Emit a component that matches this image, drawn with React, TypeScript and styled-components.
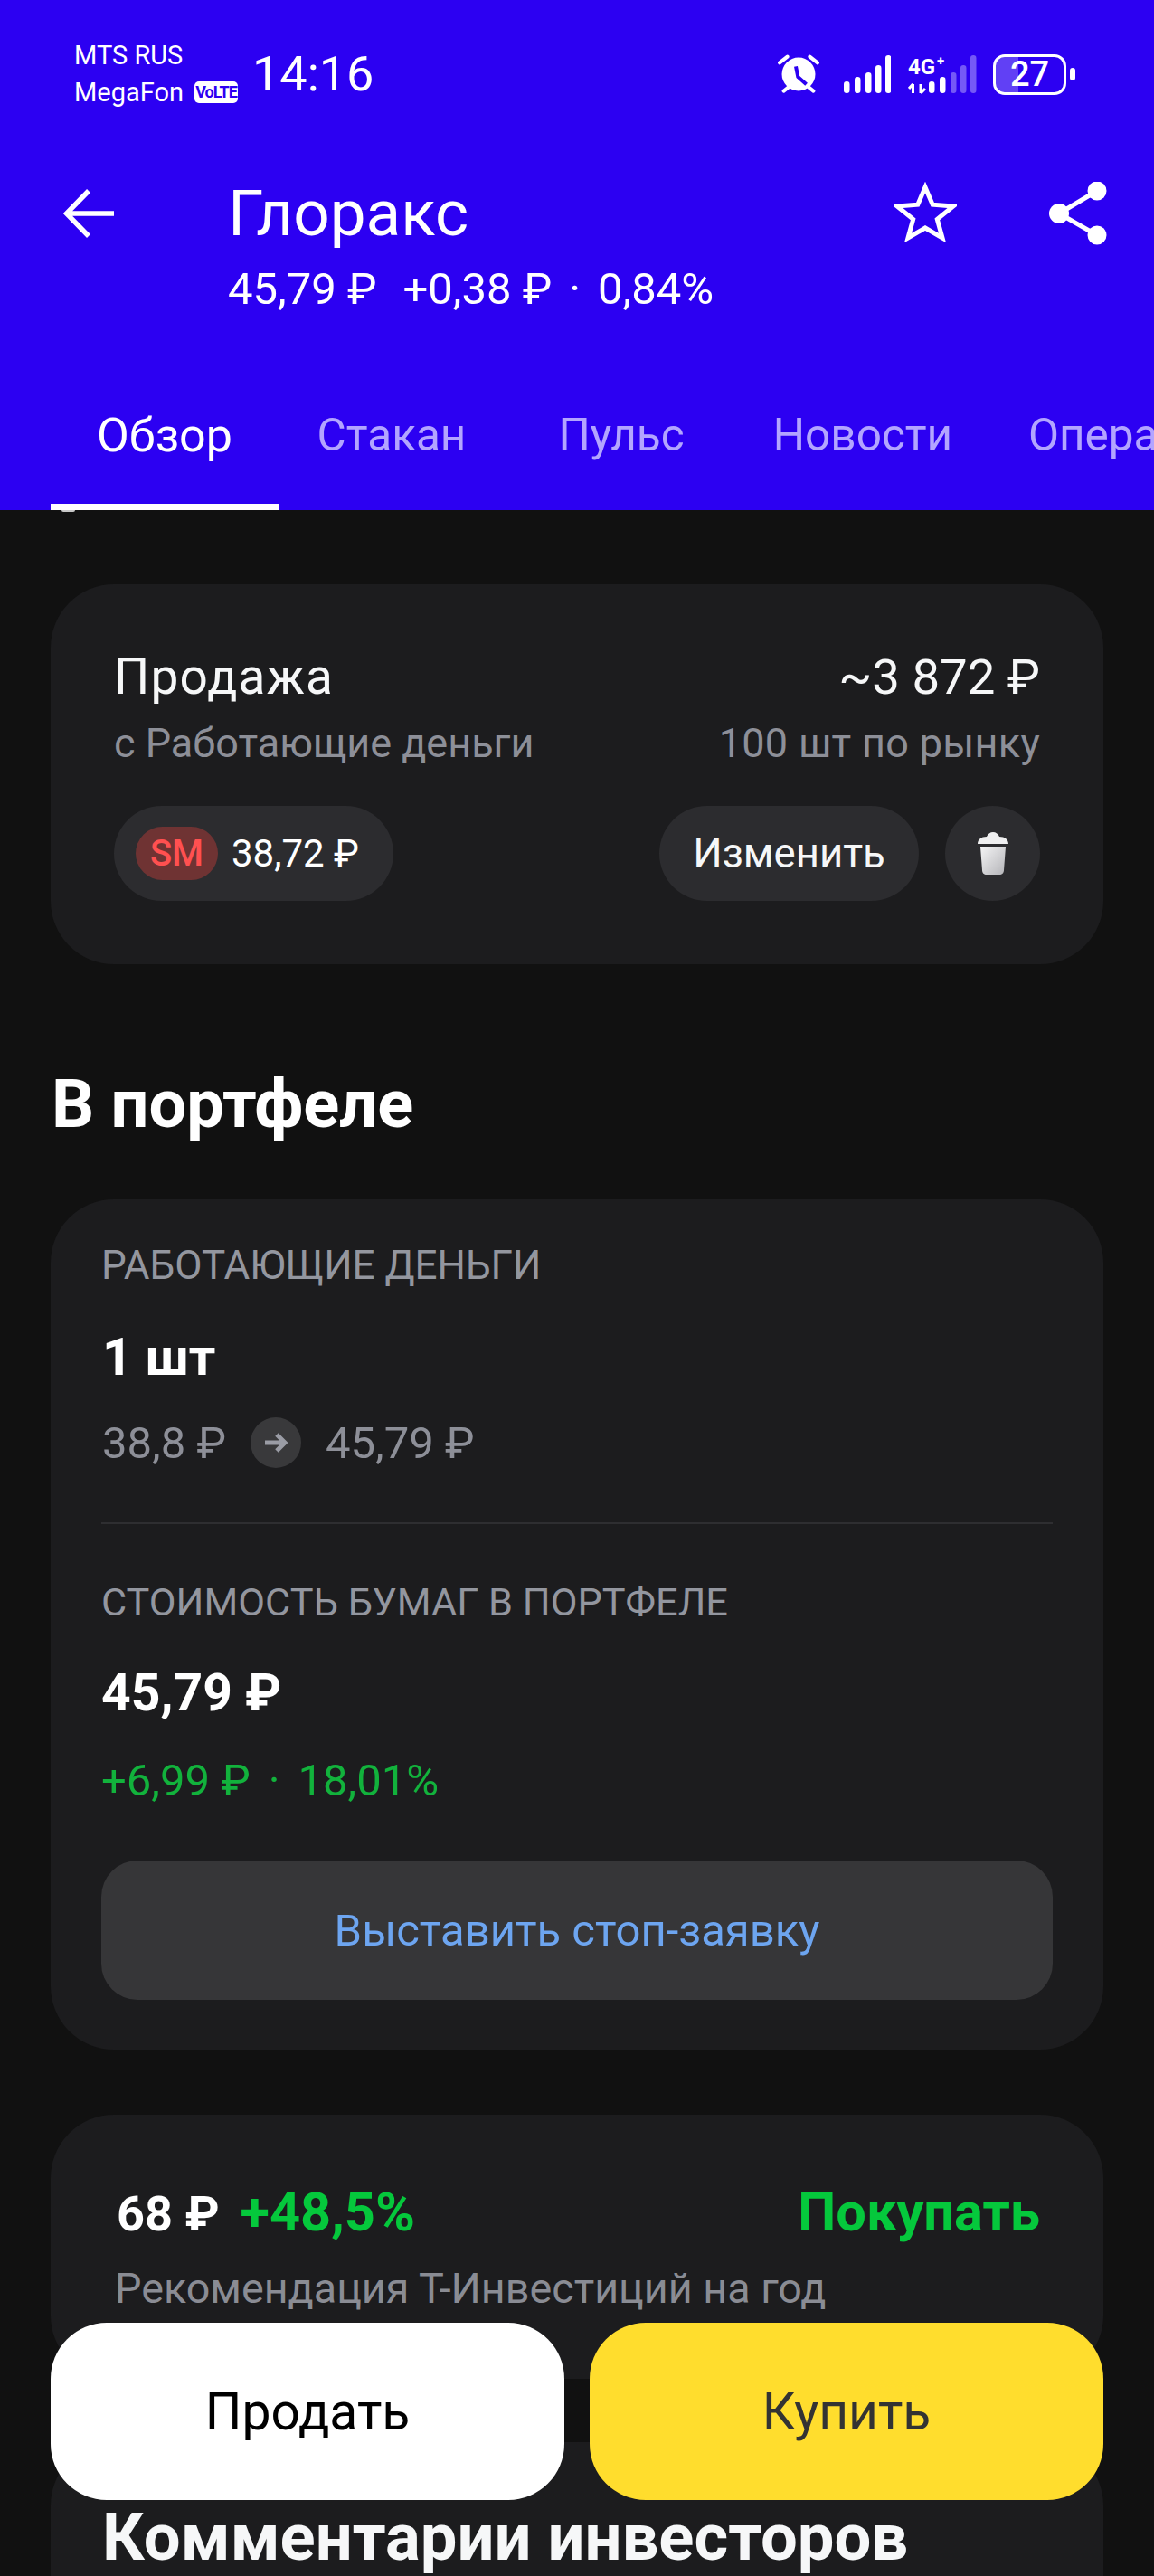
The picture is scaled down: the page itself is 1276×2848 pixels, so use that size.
import React from 'react';
import styled, { createGlobalStyle } from 'styled-components';

const GlobalStyle = createGlobalStyle`
  html, body {
    margin: 0;
    padding: 0;
    background: #111111;
  }
  * {
    box-sizing: border-box;
  }
`;

const tabs = [
  { label: 'Обзор', width: 252, active: true },
  { label: 'Стакан', width: 250 },
  { label: 'Пульс', width: 258 },
  { label: 'Новости', width: 276 },
  { label: 'Операции', width: 320 },
];

function App() {
  return (
    <Page>
      <GlobalStyle />
      <Header>
        <StatusBar>
          <Carriers>
            <CarrierLine>MTS RUS</CarrierLine>
            <CarrierLine>
              MegaFon<VoLte>VoLTE</VoLte>
            </CarrierLine>
          </Carriers>
          <Time>14:16</Time>
          <StatusIcons>
            <svg width="46" height="44" viewBox="0 0 46 44">
              <circle cx="23" cy="22" r="18.5" fill="#fff" />
              <path d="M2 9.3 10.6 2.6M44 9.3 35.4 2.6M6.6 40.6l5-4M39.4 40.6l-5-4" stroke="#fff" strokeWidth="4" strokeLinecap="round" />
              <path d="M20 13.3 22.3 25 31.6 33.3" stroke="#2c00f2" strokeWidth="4" fill="none" />
            </svg>
            <SignalIcon width="52" height="44" viewBox="0 0 52 44">
              <rect x="0" y="30" width="6.5" height="13" rx="3.2" fill="#fff" />
              <rect x="12" y="25" width="6.5" height="18" rx="3.2" fill="#fff" />
              <rect x="24" y="20" width="6.5" height="23" rx="3.2" fill="#fff" />
              <rect x="35" y="12" width="6.5" height="31" rx="3.2" fill="#fff" />
              <rect x="46" y="1" width="6.5" height="42" rx="3.2" fill="#fff" />
            </SignalIcon>
            <NetworkIcon width="81" height="44" viewBox="0 0 81 44">
              <text x="0" y="22" fill="#fff" fontFamily="Roboto, sans-serif" fontWeight="700" fontSize="24">4G</text>
              <text x="32" y="12" fill="#fff" fontFamily="Roboto, sans-serif" fontWeight="700" fontSize="15">+</text>
              <path d="M5.5 43V33M5.5 33 1 38M14 33V43M14 43 19 38" stroke="#fff" strokeWidth="3" fill="none" />
              <rect x="23" y="30" width="6.5" height="13" rx="3.2" fill="#fff" />
              <rect x="35" y="25" width="6.5" height="18" rx="3.2" fill="#fff" />
              <rect x="47" y="20" width="6.5" height="23" rx="3.2" fill="#fff" fillOpacity="0.35" />
              <rect x="58" y="12" width="6.5" height="31" rx="3.2" fill="#fff" fillOpacity="0.35" />
              <rect x="69" y="1" width="6.5" height="42" rx="3.2" fill="#fff" fillOpacity="0.35" />
            </NetworkIcon>
            <Battery>
              <BatteryFill />
              <BatteryText>27</BatteryText>
            </Battery>
            <BatteryNub />
          </StatusIcons>
        </StatusBar>
        <NavRow>
          <BackIcon width="56" height="56" viewBox="0 0 56 56">
            <path d="M3 28H56M28 3 3.5 28 28 53" stroke="#fff" strokeWidth="5.5" fill="none" />
          </BackIcon>
          <TitleBlock>
            <Title>Глоракс</Title>
            <PriceRow>
              <span>45,79 ₽</span>
              <PriceChange>+0,38 ₽</PriceChange>
              <PriceDot>·</PriceDot>
              <span>0,84%</span>
            </PriceRow>
          </TitleBlock>
          <NavActions>
            <StarIcon width="70" height="66" viewBox="0 0 70 66">
              <path d="M35 6 43.2 25.2 66 27 48.3 41.3 54 62 35 51 16 62 21.7 41.3 4 27 26.8 25.2Z" stroke="#fff" strokeWidth="5" fill="none" />
            </StarIcon>
            <ShareIcon width="64" height="70" viewBox="0 0 64 70">
              <path d="M53 10 11 35 53 59" stroke="#fff" strokeWidth="5" fill="none" />
              <circle cx="53" cy="10" r="10.5" fill="#fff" />
              <circle cx="11" cy="35" r="11" fill="#fff" />
              <circle cx="53" cy="59" r="10.5" fill="#fff" />
            </ShareIcon>
          </NavActions>
        </NavRow>
        <Tabs>
          {tabs.map(tab => (
            <Tab key={tab.label} $width={tab.width} $active={tab.active}>
              {tab.label}
            </Tab>
          ))}
        </Tabs>
      </Header>

      <Content>
        <OrderCard>
          <OrderRow>
            <OrderTitle $size={55} $spacing={1.2}>Продажа</OrderTitle>
            <OrderTitle $size={54.5}>~3 872 ₽</OrderTitle>
          </OrderRow>
          <OrderSubRow>
            <SubText>с Работающие деньги</SubText>
            <SubText $spacing={0.3}>100 шт по рынку</SubText>
          </OrderSubRow>
          <OrderActions>
            <PricePill>
              <SmBadge>SM</SmBadge>
              <PillPrice>38,72 ₽</PillPrice>
            </PricePill>
            <ActionGroup>
              <EditButton>Изменить</EditButton>
              <TrashButton>
                <svg width="34" height="47" viewBox="0 0 34 47">
                  <defs>
                    <linearGradient id="trash" x1="0" y1="0" x2="1" y2="1">
                      <stop offset="0" stopColor="#f4f4f5" />
                      <stop offset="1" stopColor="#b4b4b8" />
                    </linearGradient>
                  </defs>
                  <path d="M0 13C0 8 4 5 10 5 11 2 14 0 17 0S23 2 24 5C30 5 34 8 34 13Z" fill="#efeff0" />
                  <path d="M3 16H31L29 42C29 45 27 47 24 47H10C7 47 5 45 5 42Z" fill="url(#trash)" />
                </svg>
              </TrashButton>
            </ActionGroup>
          </OrderActions>
        </OrderCard>

        <SectionTitle>В портфеле</SectionTitle>

        <PortfolioCard>
          <Eyebrow $size={44}>РАБОТАЮЩИЕ ДЕНЬГИ</Eyebrow>
          <Amount>1 шт</Amount>
          <PriceFlow>
            <span>38,8 ₽</span>
            <FlowArrow>
              <svg width="26" height="24" viewBox="0 0 26 24">
                <path d="M1 12H23M14 3 23 12 14 21" stroke="#9a9ca5" strokeWidth="5" fill="none" />
              </svg>
            </FlowArrow>
            <span>45,79 ₽</span>
          </PriceFlow>
          <Divider />
          <Eyebrow $size={43.3}>СТОИМОСТЬ БУМАГ В ПОРТФЕЛЕ</Eyebrow>
          <Total>45,79 ₽</Total>
          <Delta>
            +6,99 ₽<DeltaDot>·</DeltaDot>18,01%
          </Delta>
          <StopButton>Выставить стоп-заявку</StopButton>
        </PortfolioCard>

        <ForecastCard>
          <ForecastRow>
            <ForecastPrice>
              68 ₽<ForecastGain>+48,5%</ForecastGain>
            </ForecastPrice>
            <ForecastGain>Покупать</ForecastGain>
          </ForecastRow>
          <ForecastNote>Рекомендация Т-Инвестиций на год</ForecastNote>
        </ForecastCard>

        <CommentsCard>
          <CommentsTitle>Комментарии инвесторов</CommentsTitle>
        </CommentsCard>
      </Content>

      <BottomBar>
        <SellButton>Продать</SellButton>
        <BuyButton>Купить</BuyButton>
      </BottomBar>
    </Page>
  );
}

export default App;

const Page = styled.div`
  position: relative;
  width: 1276px;
  height: 2848px;
  overflow: hidden;
  background: #111111;
  font-family: Roboto, 'Noto Sans', sans-serif;
  color: #fff;
`;

const Header = styled.header`
  height: 564px;
  background: #2c00f2;
`;

const StatusBar = styled.div`
  display: flex;
  align-items: flex-start;
  height: 122px;
  padding: 40px 87px 0 82px;
`;

const Carriers = styled.div`
  width: 197px;
`;

const CarrierLine = styled.div`
  display: flex;
  align-items: center;
  height: 41px;
  font-size: 29px;
`;

const VoLte = styled.span`
  display: inline-block;
  margin-left: 12px;
  width: 48px;
  height: 24px;
  border-radius: 5px;
  background: #fff;
  color: #2c00f2;
  font-size: 18px;
  font-weight: 700;
  line-height: 24px;
  text-align: center;
  letter-spacing: -1px;
`;

const Time = styled.div`
  font-size: 54px;
  line-height: 84px;
`;

const StatusIcons = styled.div`
  display: flex;
  align-items: flex-start;
  margin-left: auto;
  margin-top: 20px;
`;

const SignalIcon = styled.svg`
  margin-left: 27px;
`;

const NetworkIcon = styled.svg`
  margin-left: 19px;
`;

const Battery = styled.div`
  position: relative;
  width: 81px;
  height: 45px;
  margin-left: 13px;
  border: 3px solid #fff;
  border-radius: 13px;
  overflow: hidden;
`;

const BatteryFill = styled.div`
  width: 25px;
  height: 100%;
  background: rgba(255, 255, 255, 0.25);
`;

const BatteryText = styled.div`
  position: absolute;
  inset: 0;
  font-size: 38px;
  font-weight: 500;
  line-height: 39px;
  text-align: center;
`;

const BatteryNub = styled.div`
  width: 6px;
  height: 14px;
  margin: 15px 0 0 4px;
  border-radius: 3px;
  background: #fff;
`;

const NavRow = styled.div`
  display: flex;
  align-items: flex-start;
  height: 308px;
  padding: 72px 52px 0 70px;
`;

const BackIcon = styled.svg`
  margin-top: 14px;
`;

const TitleBlock = styled.div`
  margin-left: 126px;
`;

const Title = styled.div`
  font-size: 71px;
  line-height: 80px;
  margin-top: 2px;
`;

const PriceRow = styled.div`
  display: flex;
  margin-top: 16px;
  font-size: 49px;
  line-height: 56px;
`;

const PriceChange = styled.span`
  margin-left: 29px;
`;

const PriceDot = styled.span`
  margin: 0 19px;
`;

const NavActions = styled.div`
  display: flex;
  align-items: flex-start;
  gap: 102px;
  margin-left: auto;
`;

const StarIcon = styled.svg`
  margin-top: 7px;
`;

const ShareIcon = styled.svg`
  margin-top: 7px;
`;

const Tabs = styled.nav`
  display: flex;
  height: 134px;
  padding-left: 56px;
`;

const Tab = styled.div<{ $width: number; $active?: boolean }>`
  position: relative;
  flex: none;
  width: ${props => props.$width}px;
  padding-bottom: 32px;
  display: flex;
  align-items: center;
  justify-content: center;
  font-size: ${props => (props.$active ? 52 : 49.5)}px;
  color: ${props => (props.$active ? '#fff' : '#b3a5ff')};
  &::after {
    content: '';
    display: ${props => (props.$active ? 'block' : 'none')};
    position: absolute;
    left: 0;
    right: 0;
    bottom: 0;
    height: 7px;
    background: #fff;
  }
  &::before {
    content: '';
    display: ${props => (props.$active ? 'block' : 'none')};
    position: absolute;
    left: 12px;
    bottom: -2px;
    width: 15px;
    height: 2px;
    border-radius: 0 0 8px 8px;
    background: #c8c8c8;
  }
`;

const Content = styled.main`
  padding: 82px 56px 0;
`;

const Card = styled.section`
  border-radius: 70px;
  background: #1c1c1e;
`;

const OrderCard = styled(Card)`
  height: 420px;
  padding: 74px 70px 0;
`;

const OrderRow = styled.div`
  display: flex;
  justify-content: space-between;
`;

const OrderTitle = styled.div<{ $size: number; $spacing?: number }>`
  font-size: ${props => props.$size}px;
  line-height: 56px;
  letter-spacing: ${props => props.$spacing ?? 0}px;
  color: #f6f7f8;
`;

const OrderSubRow = styled.div`
  display: flex;
  justify-content: space-between;
  margin-top: 18px;
`;

const SubText = styled.div<{ $spacing?: number }>`
  font-size: 45px;
  line-height: 56px;
  letter-spacing: ${props => props.$spacing ?? 0}px;
  color: #8d8f98;
`;

const OrderActions = styled.div`
  display: flex;
  justify-content: space-between;
  margin-top: 41px;
`;

const PricePill = styled.div`
  display: flex;
  align-items: center;
  width: 309px;
  height: 105px;
  padding-left: 24px;
  border-radius: 53px;
  background: #2c2c2f;
`;

const SmBadge = styled.div`
  width: 91px;
  height: 59px;
  border-radius: 30px;
  background: #6f3333;
  color: #ff5050;
  font-size: 40px;
  font-weight: 500;
  line-height: 59px;
  text-align: center;
`;

const PillPrice = styled.div`
  margin-left: 15px;
  font-size: 42px;
`;

const ActionGroup = styled.div`
  display: flex;
  gap: 29px;
`;

const EditButton = styled.div`
  display: flex;
  align-items: center;
  justify-content: center;
  width: 287px;
  height: 105px;
  border-radius: 53px;
  background: #2c2c2f;
  font-size: 45.5px;
  color: #f6f7f8;
`;

const TrashButton = styled.div`
  display: flex;
  align-items: center;
  justify-content: center;
  width: 105px;
  height: 105px;
  border-radius: 50%;
  background: #2c2c2f;
`;

const SectionTitle = styled.h2`
  margin: 115px 0 65px;
  padding-left: 1px;
  font-size: 74px;
  font-weight: 700;
  line-height: 80px;
`;

const PortfolioCard = styled(Card)`
  padding: 48px 56px 55px;
`;

const Eyebrow = styled.div<{ $size: number }>`
  font-size: ${props => props.$size}px;
  line-height: 50px;
  color: #93969f;
`;

const Amount = styled.div`
  margin-top: 46px;
  padding-left: 1px;
  font-size: 58px;
  font-weight: 700;
  line-height: 60px;
`;

const PriceFlow = styled.div`
  display: flex;
  align-items: center;
  gap: 27px;
  height: 56px;
  margin-top: 37px;
  padding-left: 1px;
  font-size: 49px;
  color: #8d8f98;
`;

const FlowArrow = styled.div`
  display: flex;
  align-items: center;
  justify-content: center;
  width: 56px;
  height: 56px;
  border-radius: 50%;
  background: #39393b;
`;

const Divider = styled.div`
  height: 2px;
  margin: 60px 0 62px;
  background: #2e2e31;
`;

const Total = styled.div`
  margin-top: 45px;
  font-size: 57px;
  font-weight: 700;
  line-height: 60px;
`;

const Delta = styled.div`
  margin-top: 39px;
  font-size: 49px;
  line-height: 56px;
  color: #12b23c;
`;

const DeltaDot = styled.span`
  margin: 0 20px;
`;

const StopButton = styled.div`
  display: flex;
  align-items: center;
  justify-content: center;
  height: 154px;
  margin-top: 60px;
  border-radius: 40px;
  background: #363638;
  color: #6da5f0;
  font-size: 49px;
`;

const ForecastCard = styled(Card)`
  height: 292px;
  margin-top: 72px;
  padding: 78px 70px 0 73px;
`;

const ForecastRow = styled.div`
  display: flex;
  justify-content: space-between;
`;

const ForecastPrice = styled.div`
  font-size: 54px;
  font-weight: 700;
  line-height: 60px;
`;

const ForecastGain = styled.span`
  margin-left: 23px;
  font-size: 59.5px;
  font-weight: 700;
  line-height: 60px;
  color: #05c83c;
`;

const ForecastNote = styled.div`
  margin-top: 24px;
  margin-left: -2px;
  font-size: 46.7px;
  line-height: 56px;
  color: #8a8c94;
`;

const CommentsCard = styled(Card)`
  margin-top: 70px;
  padding: 66px 57px 100px;
`;

const CommentsTitle = styled.h2`
  margin: 0;
  font-size: 72.4px;
  font-weight: 700;
  line-height: 80px;
  color: #f6f7f8;
`;

const BottomBar = styled.div`
  position: absolute;
  left: 56px;
  right: 56px;
  bottom: 84px;
  display: flex;
  gap: 28px;
`;

const SellButton = styled.div`
  flex: 1;
  display: flex;
  align-items: center;
  justify-content: center;
  height: 196px;
  border-radius: 62px;
  background: #fff;
  color: #000;
  font-size: 57px;
`;

const BuyButton = styled(SellButton)`
  background: #ffdd2d;
  color: #333;
`;
